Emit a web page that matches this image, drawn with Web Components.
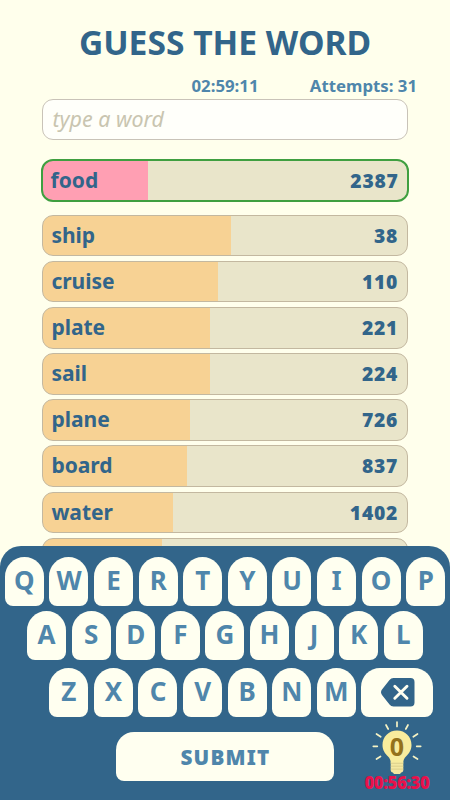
<!DOCTYPE html>
<html lang="en">
<head>
<meta charset="UTF-8">
<meta name="viewport" content="width=device-width, initial-scale=1">
<title>Guess the Word</title>
<style>
  :root {
    --page: #ffffec;
    --ink: #32658a;
    --ink-soft: #4f86ab;
    --track: #e9e5ca;
    --fill: #f7d294;
    --edge: #c3b8a0;
    --key: #fffff0;
  }

  html, body {
    margin: 0;
    height: 100%;
    overflow: hidden;
    background: var(--page);
    font-family: "Noto Sans", "Open Sans", sans-serif;
  }
</style>
</head>
<body>
<word-game></word-game>

<script>
// ─── Header ───────────────────────────────────────────────────────────────────
class GameHeader extends HTMLElement {
  constructor() {
    super();
    this.attachShadow({ mode: "open" });
  }

  connectedCallback() {
    this.shadowRoot.innerHTML = `
      <style>
        :host {
          display: block;
          color: var(--ink);
        }

        h1 {
          margin: 0;
          padding-top: 18px;
          font-size: 33.6px;
          line-height: 48px;
          font-weight: 700;
          text-align: center;
          white-space: nowrap;
        }

        .status {
          display: grid;
          grid-template-columns: 1fr auto 1fr;
          margin-top: 9px;
          padding-right: 33px;
          padding-left: 33px;
          height: 24px;
          line-height: 22px;
          font-size: 16.8px;
          font-weight: 700;
          color: var(--ink-soft);
        }

        .time { grid-column: 2; }
        .attempts { text-align: right; }
      </style>

      <h1>${this.getAttribute("heading")}</h1>
      <div class="status">
        <span class="time">${this.getAttribute("time")}</span>
        <span class="attempts">Attempts: ${this.getAttribute("attempts")}</span>
      </div>
    `;
  }
}

// ─── Input ────────────────────────────────────────────────────────────────────
class WordInput extends HTMLElement {
  constructor() {
    super();
    this.attachShadow({ mode: "open" });
  }

  connectedCallback() {
    this.shadowRoot.innerHTML = `
      <style>
        :host {
          display: block;
          box-sizing: border-box;
          height: 41px;
          margin: 0 42px 0.5px;
          padding-left: 9.5px;
          border: 1px solid #c9c3b8;
          border-radius: 11px;
          background: #fffffa;
          color: #c9c5b0;
          font-size: 21.4px;
          line-height: 37px;
          font-style: italic;
        }
      </style>
      <slot></slot>
    `;
  }
}

// ─── Guess row ────────────────────────────────────────────────────────────────
class GuessRow extends HTMLElement {
  constructor() {
    super();
    this.attachShadow({ mode: "open" });
  }

  connectedCallback() {
    this.style.setProperty("--amount", this.getAttribute("fill") + "px");
    this.shadowRoot.innerHTML = `
      <style>
        :host {
          display: flex;
          justify-content: space-between;
          box-sizing: border-box;
          flex: none;
          height: 41.5px;
          padding: 0 8.8px 0 8.4px;
          border: 1px solid var(--edge);
          border-radius: 11px;
          background: linear-gradient(to right, var(--fill) var(--amount), var(--track) var(--amount));
          color: var(--ink);
          font-size: 21px;
          line-height: 39px;
          font-weight: 700;
        }

        :host([latest]) {
          --fill: #ff9fb3;
          height: 43px;
          margin: 0 -1px;
          padding: 0 8.3px 0 7.5px;
          border: 2px solid #3f9f40;
          border-radius: 12px;
        }

        .rank {
          font-size: 19.3px;
          font-weight: 900;
          letter-spacing: 0.8px;
        }
      </style>

      <span><slot></slot></span>
      <span class="rank">${this.getAttribute("rank")}</span>
    `;
  }
}

// ─── Keys ─────────────────────────────────────────────────────────────────────
class KeyCap extends HTMLElement {
  constructor() {
    super();
    this.attachShadow({ mode: "open" });
  }

  connectedCallback() {
    this.shadowRoot.innerHTML = `
      <style>
        :host {
          display: flex;
          align-items: center;
          justify-content: center;
          box-sizing: border-box;
          flex: none;
          width: 39px;
          height: 48.5px;
          padding-bottom: 3px;
          border-radius: 19.5px 19.5px 8px 8px;
          background: var(--key);
          color: var(--ink-soft);
          font-size: 26px;
          line-height: 1;
          font-weight: 700;
        }

        :host([wide]) {
          width: 72px;
          padding-bottom: 0;
          border-radius: 19px 19px 8px 8px;
        }

        :host([submit]) {
          width: 218px;
          border-radius: 18px 18px 8px 8px;
          padding: 3px 0 0 2px;
          font-size: 20.7px;
          font-weight: 900;
          letter-spacing: 1.2px;
        }
      </style>
      <slot></slot>
    `;
  }
}

// ─── Hint bulb ────────────────────────────────────────────────────────────────
class HintBulb extends HTMLElement {
  constructor() {
    super();
    this.attachShadow({ mode: "open" });
  }

  connectedCallback() {
    this.shadowRoot.innerHTML = `
      <style>
        :host {
          display: flex;
          flex-direction: column;
          align-items: center;
          width: 70px;
        }

        .bulb {
          display: grid;
          width: 52px;
          height: 56px;
        }

        .bulb > * { grid-area: 1 / 1; }

        .count {
          padding-top: 13px;
          text-align: center;
          color: #94721b;
          font-size: 25px;
          line-height: 26px;
          font-weight: 700;
        }

        .timer {
          margin-top: -4px;
          color: #e8114b;
          font-size: 16.8px;
          line-height: 22px;
          font-weight: 900;
          letter-spacing: -0.5px;
          white-space: nowrap;
        }
      </style>

      <div class="bulb">
        <svg width="52" height="56" viewBox="0 0 52 56">
          <g stroke="#f6f3c4" stroke-width="1.7" stroke-linecap="round">
            <path d="M26 2v4.500M15 5l2.200 4M37 5l-2.200 4M5.500 14l4.200 2.800M46.500 14l-4.200 2.800M2.300 26.300h4M49.700 26.300h-4M5.500 39l4-2.500M46.500 39l-4-2.500"/>
          </g>
          <path fill="#f8ec9d" d="M26 10.500C17.700 10.500 11.500 16.700 11.500 25c0 5.300 2.600 8.600 5.300 11.200 2.200 2.200 2.900 4 2.900 6.800h12.600c0-2.800.7-4.600 2.900-6.800 2.700-2.600 5.300-5.900 5.300-11.200 0-8.300-6.200-14.500-14.500-14.500z"/>
          <path fill="#f4e8a1" d="M19.700 42.500h12.600v7.500c0 1.500-.8 2.300-2.100 2.600L29 54h-6l-1.200-1.400c-1.300-.3-2.100-1.100-2.100-2.600z"/>
          <path stroke="#d6c986" stroke-width=".8" d="M19.700 43.300h12.600M19.700 46.200h12.600M19.700 49.100h12.600"/>
        </svg>
        <span class="count">${this.getAttribute("count")}</span>
      </div>
      <span class="timer"><slot></slot></span>
    `;
  }
}

// ─── Keyboard ─────────────────────────────────────────────────────────────────
class GameKeyboard extends HTMLElement {
  constructor() {
    super();
    this.attachShadow({ mode: "open" });
  }

  connectedCallback() {
    const keys = (letters) => [...letters].map((l) => `<key-cap>${l}</key-cap>`).join("");

    this.shadowRoot.innerHTML = `
      <style>
        :host {
          display: block;
          box-sizing: border-box;
          flex: none;
          height: 254.5px;
          padding-top: 11.5px;
          border-radius: 21px 21px 0 0;
          background: var(--ink);
        }

        .row {
          display: flex;
          gap: 5.6px;
          padding-left: 4.9px;
          margin-bottom: 5.5px;
        }

        .second { padding-left: 27px; margin-bottom: 8.5px; }
        .third { padding-left: 49.3px; margin-bottom: 0; }

        .bottom {
          display: flex;
          align-items: flex-start;
          padding-left: 115.5px;
        }

        key-cap[submit] { margin-top: 15.5px; }
        hint-bulb { margin: 3px 0 0 28.4px; }
      </style>

      <div class="row">${keys("QWERTYUIOP")}</div>
      <div class="row second">${keys("ASDFGHJKL")}</div>
      <div class="row third">
        ${keys("ZXCVBNM")}
        <key-cap wide>
          <svg width="35" height="30" viewBox="0 0 35 30">
            <path fill="#32658a" d="M13.500 1H30.500Q34.500 1 34.500 5V25.500Q34.500 29.500 30.500 29.500H13.500Q11 29.500 9.500 27.500L2 18Q0 15.200 2 12.500L9.500 3Q11 1 13.500 1Z"/>
            <path stroke="#fffff0" stroke-width="2.900" stroke-linecap="round" d="M14.800 9.300L27 21.300M27 9.300L14.800 21.300"/>
          </svg>
        </key-cap>
      </div>
      <div class="bottom">
        <key-cap submit>SUBMIT</key-cap>
        <hint-bulb count="0">00:56:30</hint-bulb>
      </div>
    `;
  }
}

// ─── Game ─────────────────────────────────────────────────────────────────────
class WordGame extends HTMLElement {
  constructor() {
    super();
    this.attachShadow({ mode: "open" });
  }

  connectedCallback() {
    // word, rank, bar width in px
    const guesses = [
      ["ship", 38, 188.5],
      ["cruise", 110, 175],
      ["plate", 221, 167.5],
      ["sail", 224, 167],
      ["plane", 726, 147.5],
      ["board", 837, 144.5],
      ["water", 1402, 130],
      ["", "", 119.5]
    ];

    this.shadowRoot.innerHTML = `
      <style>
        :host {
          display: flex;
          flex-direction: column;
          width: 450px;
          height: 800px;
          overflow: hidden;
        }

        .list {
          display: flex;
          flex-direction: column;
          flex: 1;
          min-height: 0;
          gap: 4.65px;
          padding: 0 42px;
          margin-top: 18.5px;
          margin-bottom: -21px;
          overflow: hidden;
        }

        .list guess-row[latest] { margin-bottom: 8.1px; }
        game-keyboard { position: relative; }
      </style>

      <game-header heading="GUESS THE WORD" time="02:59:11" attempts="31"></game-header>
      <word-input>type a word</word-input>
      <div class="list">
        <guess-row latest rank="2387" fill="105.5">food</guess-row>
        ${guesses.map(([word, rank, fill]) => `<guess-row rank="${rank}" fill="${fill}">${word}</guess-row>`).join("")}
      </div>
      <game-keyboard></game-keyboard>
    `;
  }
}

customElements.define("game-header", GameHeader);
customElements.define("word-input", WordInput);
customElements.define("guess-row", GuessRow);
customElements.define("key-cap", KeyCap);
customElements.define("hint-bulb", HintBulb);
customElements.define("game-keyboard", GameKeyboard);
customElements.define("word-game", WordGame);
</script>
</body>
</html>
